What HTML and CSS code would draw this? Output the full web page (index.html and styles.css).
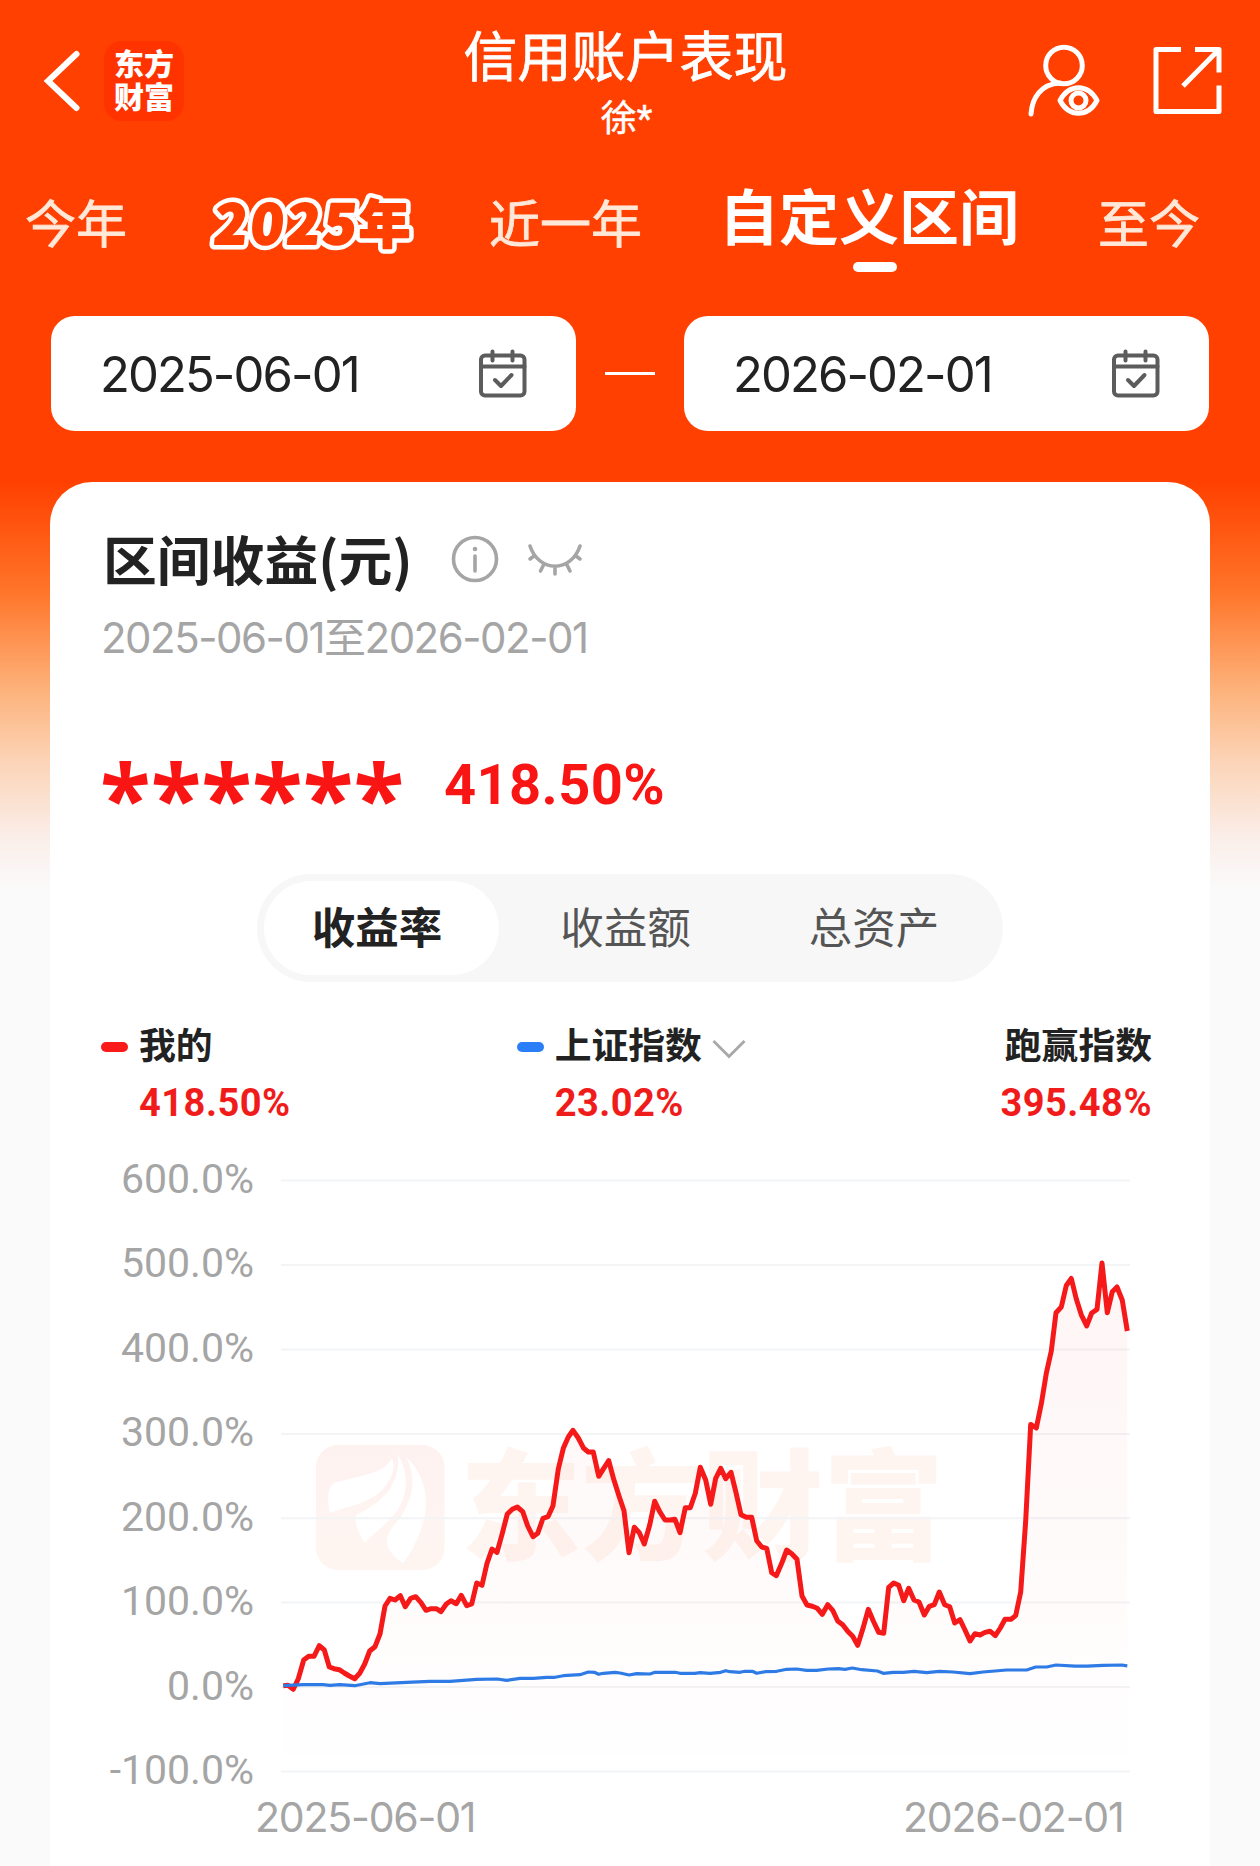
FILE: index.html
```html
<!DOCTYPE html>
<html lang="zh-CN">
<head>
    <meta charset="UTF-8">
    <meta name="viewport" content="width=device-width, initial-scale=1.0">
    <title>信用账户表现</title>
    <link rel="stylesheet" href="styles.css">
</head>
<body>
    <div class="page">
        <header class="header">
            <div class="header-left">
                <svg class="back" width="40" height="64" viewBox="0 0 40 64">
                    <path d="M34.500 5L6 32L34.500 59" fill="none" stroke="#fff" stroke-width="6" stroke-linecap="round"/>
                </svg>
                <div class="logo">东方<br>财富</div>
            </div>
            <div class="header-title">
                <h1>信用账户表现</h1>
                <p>徐*</p>
            </div>
            <div class="header-right">
                <svg width="76" height="76" viewBox="0 0 76 76" fill="none" stroke="#fff" stroke-width="5">
                    <circle cx="39" cy="24.500" r="18.3"/>
                    <path d="M6 73C7 57 16 43 35 42" stroke-linecap="round"/>
                    <path d="M35 59.500C44 42.500 63 42.500 72 59.500C63 76.500 44 76.500 35 59.500Z" stroke-linejoin="round"/>
                    <circle cx="53.500" cy="59.500" r="7.500"/>
                </svg>
                <svg width="70" height="70" viewBox="0 0 70 70" fill="none" stroke="#fff" stroke-width="5">
                    <path d="M28 3.500H3V65.500H66V39.500M42 3.500H66V26.500M65 4.500L30 40" stroke-linejoin="round"/>
                </svg>
            </div>
        </header>

        <nav class="tabs">
            <span class="tab">今年</span>
            <svg class="tab-year" width="206" height="64" viewBox="0 0 206 64">
                <defs>
                    <g id="year">
                        <text class="year-text" transform="skewX(-6)" x="13" y="50" textLength="142" lengthAdjust="spacing">2025</text>
                        <text class="year-text year-char" x="154" y="49">年</text>
                    </g>
                </defs>
                <use href="#year" class="year-outline"/>
                <use href="#year" class="year-fill"/>
            </svg>
            <span class="tab">近一年</span>
            <span class="tab active">自定义区间</span>
            <span class="tab">至今</span>
        </nav>

        <div class="dates">
            <div class="date-box">
                <span>2025-06-01</span>
                <svg class="calendar" width="50" height="50" viewBox="0 0 50 50">
                    <rect x="3" y="6.500" width="43.500" height="40" rx="4"/>
                    <path d="M3 17.500H46.500M14.500 2.500V11.500M34.500 2.500V11.500M17 31L23 37L33.500 26"/>
                </svg>
            </div>
            <i class="dates-line"></i>
            <div class="date-box">
                <span>2026-02-01</span>
                <svg class="calendar" width="50" height="50" viewBox="0 0 50 50">
                    <rect x="3" y="6.500" width="43.500" height="40" rx="4"/>
                    <path d="M3 17.500H46.500M14.500 2.500V11.500M34.500 2.500V11.500M17 31L23 37L33.500 26"/>
                </svg>
            </div>
        </div>

        <main class="card">
            <div class="card-title">
                <h2>区间收益(元)</h2>
                <svg width="50" height="50" viewBox="0 0 50 50" fill="none" stroke="#a5a5a5" stroke-width="3.600">
                    <circle cx="25" cy="25" r="21.500"/>
                    <path d="M25 22V37" stroke-linecap="round"/>
                    <circle cx="25" cy="15" r="2.300" fill="#a5a5a5" stroke="none"/>
                </svg>
                <svg class="eye" width="56" height="34" viewBox="0 0 56 34" fill="none" stroke="#a5a5a5" stroke-width="3.600" stroke-linecap="round">
                    <path d="M3 4C12 31 44 31 53 4M7 14L3 17M17 22L13.500 29M28 24V32M39.500 22L43 29M49 14L53 17"/>
                </svg>
            </div>
            <p class="period">2025-06-01至2026-02-01</p>

            <div class="profit">
                <span class="hidden-amount">******</span>
                <span class="profit-rate">418.50%</span>
            </div>

            <div class="segment">
                <span class="on">收益率</span>
                <span>收益额</span>
                <span>总资产</span>
            </div>

            <div class="legend">
                <div class="legend-item mine">
                    <p><i class="mark red"></i>我的</p>
                    <b>418.50%</b>
                </div>
                <div class="legend-item index">
                    <p><i class="mark blue"></i>上证指数
                        <svg width="36" height="22" viewBox="0 0 36 22">
                            <path d="M2.500 3L18 18.500L33.500 3" fill="none" stroke="#a8a8a8" stroke-width="2.800"/>
                        </svg>
                    </p>
                    <b>23.02%</b>
                </div>
                <div class="legend-item beat">
                    <p>跑赢指数</p>
                    <b>395.48%</b>
                </div>
            </div>

            <svg class="chart" width="1160" height="726" viewBox="50 1140 1160 726">
                <defs>
                    <linearGradient id="area" gradientUnits="userSpaceOnUse" x1="0" y1="1262" x2="0" y2="1756">
                        <stop offset="0" stop-color="#f51a1a" stop-opacity="0.045"/>
                        <stop offset="1" stop-color="#f51a1a" stop-opacity="0.003"/>
                    </linearGradient>
                    <linearGradient id="brand" x1="0" y1="0" x2="0" y2="1">
                        <stop offset="0" stop-color="#fef2f0"/>
                        <stop offset="1" stop-color="#fef5f1"/>
                    </linearGradient>
                </defs>

                <!-- watermark -->
                <rect x="316" y="1445" width="128.500" height="125" rx="22" fill="url(#brand)"/>
                <g fill="#fff">
                    <path d="M392 1458C384 1474 362 1475 334 1483C327 1488 327 1500 330 1513C350 1506 372 1502 384 1488C392 1478 396 1468 392 1458Z"/>
                    <path d="M398 1455C400 1480 388 1500 356 1515C354 1525 360 1536 365 1543C372 1534 386 1526 397 1511C409 1494 408 1470 398 1455Z"/>
                    <path d="M406 1457C418 1478 412 1500 400 1518C389 1530 383 1540 390 1551C394 1557 399 1561 403 1563C414 1550 427 1522 426 1500C425 1480 416 1466 406 1457Z"/>
                </g>
                <text class="watermark" x="460" y="1551" textLength="484" lengthAdjust="spacingAndGlyphs">东方财富</text>

                <path class="grid" d="M281 1180.500H1130M281 1265H1130M281 1349.500H1130M281 1434H1130M281 1518.300H1130M281 1602.500H1130M281 1687H1130M281 1771.500H1130"/>

                <g class="axis axis-y">
                    <text x="254" y="1192.5">600.0%</text>
                    <text x="254" y="1276.5">500.0%</text>
                    <text x="254" y="1361.5">400.0%</text>
                    <text x="254" y="1445.5">300.0%</text>
                    <text x="254" y="1530.5">200.0%</text>
                    <text x="254" y="1614.5">100.0%</text>
                    <text x="254" y="1699.5">0.0%</text>
                    <text x="254" y="1783.5">-100.0%</text>
                </g>
                <g class="axis axis-x">
                    <text x="255" y="1832">2025-06-01</text>
                    <text x="903" y="1832">2026-02-01</text>
                </g>

                <polygon id="mineArea" fill="url(#area)"/>
                <polyline id="mineLine" class="line-mine"/>
                <polyline id="indexLine" class="line-index"/>
            </svg>
        </main>
    </div>

    <script src="chart.js"></script>
</body>
</html>
```
FILE: styles.css
```css
* {
    box-sizing: border-box;
    margin: 0;
    padding: 0;
}
body {
    font-family: Roboto, "Noto Sans CJK SC", sans-serif;
    background-color: #fafafa;
    color: #222;
}
.page {
    width: 1260px;
    height: 1866px;
    overflow: hidden;
    background: linear-gradient(#ff4000 0, #ff4000 482px, #ff7428 590px, #fdb27b 690px, #fcd3b6 760px, #faeee9 838px, #fafafa 888px);
}
svg {
    display: block;
    flex: none;
}

/* header */
.header {
    display: grid;
    grid-template-columns: 300px 1fr 300px;
    height: 160px;
    color: #fff;
}
.header-left {
    display: flex;
    align-items: center;
    gap: 22px;
    height: 162px;
    padding-left: 42px;
}
.logo {
    width: 80px;
    height: 80px;
    padding-top: 7px;
    border-radius: 18px;
    background-color: #ff3300;
    font-size: 30px;
    font-weight: 900;
    line-height: 33px;
    text-align: center;
}
.header-title {
    padding-top: 24px;
    padding-right: 9px;
    text-align: center;
}
.header-title h1 {
    font-size: 54px;
    font-weight: 400;
    line-height: 70px;
    -webkit-text-stroke: 0.8px #fff;
}
.header-title p {
    padding-left: 2px;
    font-size: 36px;
    line-height: 50px;
    -webkit-text-stroke: 0.5px #fff;
}
.header-right {
    display: flex;
    align-items: flex-start;
    gap: 52px;
    padding: 41px 0 0 65px;
}
.header-right svg + svg {
    margin-top: 5px;
}

/* period tabs */
.tabs {
    display: flex;
    align-items: flex-start;
    gap: 78px;
    height: 156px;
    padding: 34px 0 0 25px;
    color: #ffe8d8;
}
.tab {
    flex: none;
    font-size: 51px;
    line-height: 64px;
    -webkit-text-stroke: 0.8px;
}
.tab.active {
    display: flex;
    flex-direction: column;
    align-items: center;
    color: #fff;
    font-size: 60px;
    font-weight: 700;
    line-height: 72px;
    margin: -10px 1px 0 -1px;
    -webkit-text-stroke: 0;
}
.tab.active::after {
    content: "";
    width: 44px;
    height: 10px;
    margin: 6px 0 0 12px;
    border-radius: 5px;
    background-color: #fff;
}
.tab-year {
    overflow: visible;
}
.year-text {
    font-family: "Noto Sans CJK SC", sans-serif;
    font-size: 54px;
    font-weight: 900;
    stroke-linejoin: round;
}
.year-char {
    font-size: 51px;
}
.year-outline {
    fill: #fff;
    stroke: #fff;
    stroke-width: 11px;
}
.year-fill {
    fill: #ff4000;
    stroke: #ff4000;
    stroke-width: 2px;
}

/* date range */
.dates {
    display: flex;
    align-items: center;
    justify-content: space-between;
    height: 115px;
    padding: 0 51px;
}
.date-box {
    display: flex;
    align-items: center;
    justify-content: space-between;
    width: 525px;
    height: 115px;
    padding: 0 48px 0 49px;
    border-radius: 24px;
    background-color: #fff;
    font-family: Inter, sans-serif;
    font-size: 49px;
    letter-spacing: -1.9px;
}
.date-box span {
    padding-top: 2px;
}
.dates-line {
    width: 50px;
    height: 3px;
    background-color: #fff;
}
.calendar {
    fill: none;
    stroke: #5c5c5c;
    stroke-width: 4;
    stroke-linecap: round;
    stroke-linejoin: round;
}

/* card */
.card {
    width: 1160px;
    height: 1384px;
    margin: 51px 50px 0;
    padding-top: 42px;
    border-radius: 42px 42px 0 0;
    background-color: #fff;
}
.card-title {
    display: flex;
    align-items: center;
    height: 70px;
    padding-left: 53px;
}
.card-title h2 {
    width: 347px;
    font-family: "Noto Sans CJK SC", sans-serif;
    font-size: 53.8px;
    font-weight: 700;
    line-height: 66px;
    padding-bottom: 3px;
    white-space: nowrap;
}
.card-title .eye {
    margin-left: 27px;
}
.period {
    padding-left: 51px;
    margin-top: 16px;
    color: #a5a5a5;
    font-family: Inter, "Noto Sans CJK SC", sans-serif;
    font-size: 42px;
    line-height: 56px;
    letter-spacing: -1.5px;
}
.profit {
    display: flex;
    height: 110px;
    margin-top: 73px;
    padding-left: 50px;
    color: #fa1515;
}
.hidden-amount {
    width: 344px;
    font-family: "Open Sans", sans-serif;
    font-size: 93px;
    font-weight: 700;
    line-height: 114px;
}
.profit-rate {
    font-size: 56px;
    font-weight: 700;
    line-height: 92px;
    letter-spacing: 0.4px;
}
.segment {
    display: flex;
    width: 746px;
    height: 108px;
    margin: 25px 0 0 207px;
    padding: 7px;
    border-radius: 54px;
    background-color: #f7f7f7;
    color: #555;
    font-size: 43.5px;
}
.segment span {
    width: 235px;
    margin-right: 13.5px;
    padding: 3px 9px 0 0;
    border-radius: 47px;
    line-height: 91px;
    text-align: center;
    flex: none;
}
.segment .on {
    background-color: #fff;
    color: #222;
    font-weight: 700;
}

/* legend */
.legend {
    display: flex;
    height: 158px;
    padding: 36px 58px 0 51px;
}
.legend-item p {
    display: flex;
    align-items: center;
    font-size: 36.8px;
    font-weight: 700;
    line-height: 57px;
}
.legend-item b {
    display: block;
    padding-left: 38px;
    color: #f01c1c;
    font-size: 38px;
    line-height: 56px;
    letter-spacing: 0.5px;
}
.legend-item svg {
    margin: 5px 0 0 9px;
}
.index {
    margin-left: 226px;
}
.beat {
    margin-left: auto;
}
.beat p {
    justify-content: flex-end;
}
.beat b {
    padding-left: 0;
}
.mark {
    width: 27px;
    height: 10px;
    margin-right: 11px;
    border-radius: 5px;
}
.mark.red {
    background-color: #fa1a1a;
}
.mark.blue {
    background-color: #2a7ff8;
}

/* chart */
.grid {
    fill: none;
    stroke: #f2f4f5;
    stroke-width: 2;
}
.axis text {
    fill: #a5a5a5;
    font-size: 41px;
}
.axis-y text {
    text-anchor: end;
}
.axis-x text {
    font-family: Inter, sans-serif;
    letter-spacing: -1.2px;
}
.watermark {
    font-family: "Noto Sans CJK SC", sans-serif;
    font-size: 120px;
    font-weight: 900;
    fill: #fef5f0;
}
.line-mine,
.line-index {
    fill: none;
    stroke: #f51919;
    stroke-width: 5;
    stroke-linejoin: round;
}
.line-index {
    stroke: #2f7be5;
    stroke-width: 3.2;
}
```
FILE: chart.js
```js
// points of both curves, in chart coordinates
var mine = '283.3,1685.7 288,1685.3 293.3,1689.3 298.3,1678.7 303.7,1660 308.7,1656.3 314,1656.3 319.3,1645.7 324.3,1650 329.3,1667 334,1668.7 339.3,1669.7 344.3,1673 349.3,1676 354.7,1678.7 359.7,1673.3 364.7,1664 369.7,1651 375,1646.7 380,1634 385,1606 390,1598.3 395,1600 400.3,1595.7 405.3,1606.7 410.7,1598.3 415.7,1596.7 421,1602.7 426,1610.3 431,1608.7 436.3,1608.7 441,1611.7 446.3,1604 451,1600.7 456.3,1603.7 461.3,1595.3 466.7,1605.7 471.7,1604 476.7,1583 482,1585.3 487,1563.3 492,1549 497,1552.3 502.3,1533.3 507.3,1514 512.3,1509.3 517.3,1507 522.7,1511.7 527.7,1526 533,1536.7 537.7,1533.3 543,1518.3 548,1516.7 553,1505.7 558.3,1469 563.3,1448.3 568.3,1437 573,1430.3 578.3,1438 583.7,1448.3 588.3,1452 593.3,1452 598.7,1476.3 603.7,1468.3 608.7,1460.7 613.7,1479.3 ' +
    '619,1496 624,1510.7 629,1552.7 634.3,1527.3 639.3,1532.7 644.3,1544 649.7,1525 654.7,1501.3 659.7,1511.7 665,1520 670,1520 675,1519.3 680,1532.7 685.3,1507.7 690.3,1507.7 695.3,1493.3 700.3,1467.3 705.7,1480 710.7,1504.3 715.7,1478.3 720.7,1468.3 725.7,1478.7 731,1472.3 736,1492.7 741,1514.7 746.3,1517.3 751.7,1517.3 756.7,1540.7 761.7,1547 766.7,1548.3 771.7,1572.7 776.3,1575.7 781.7,1563.3 786.7,1550 792,1554 797,1559.3 802,1596 807,1605 812.3,1606.3 817.3,1608.3 822.3,1614.3 827.7,1604.7 832.7,1610.3 837.7,1621 842.7,1624.7 847.7,1631.3 852.7,1636.3 857.7,1645.3 863,1628.3 868.3,1609.3 873.3,1621 878.7,1632.3 883.7,1633.3 888.7,1587.3 893.7,1583 898.7,1585.3 903.7,1600.7 908.7,1588.3 914,1600 919,1602 924.3,1615 929.3,1606.3 934.3,1604.7 939.3,1592 944.7,1604.7 949.7,1606.7 954.7,1623 960,1619.7 ' +
    '965,1630 970,1641 975,1633.7 980,1635 985,1632.4 990,1631.2 995.3,1635.7 1000.3,1628 1005,1619.3 1011,1619.3 1015.7,1615.6 1020.7,1592 1025.7,1520.8 1030.7,1424.4 1036.3,1428 1041.3,1403.8 1046.3,1373.3 1051.3,1351 1056,1312.7 1061.3,1307 1066.3,1285.5 1071.3,1278.5 1076.3,1299 1081.3,1314.8 1086.7,1325.9 1091.7,1313 1097,1309.4 1102,1262.9 1107.3,1312.7 1112.3,1291.7 1117,1287 1122.3,1300.3 1127.3,1331';

var index = '283.3,1685.7 303,1684.7 323,1684.7 330,1685.3 340,1684.7 354.7,1685.7 370,1682.7 380,1683.7 406.7,1682.3 430,1681.3 450,1681.3 476.7,1679.3 497.3,1679 506.7,1680.3 520,1678.3 533.3,1678.3 546.7,1677.3 555,1677.3 563.3,1675.7 580,1674.7 588.3,1672 594.3,1672.3 598.7,1674.3 603.3,1673.3 615,1672.3 620,1673 629,1675 636.7,1673.7 650,1674 655,1672.3 675,1672.3 680,1673.3 695,1673.3 700,1672.7 710,1673.3 720.7,1672.3 725.7,1670.7 730,1671.7 740,1672.3 745,1671.3 752.3,1671.3 756.7,1673.3 765,1671.7 776.7,1671.3 786.7,1669.3 796.7,1669 806.7,1670.3 816.7,1670.3 828.3,1669 838.3,1668.7 845,1669.3 852.3,1668 861.7,1669.7 877.3,1671 883.3,1673.3 893.3,1672.3 903.3,1672.3 914,1671.3 926.7,1672.7 939.3,1671.3 953,1672 970,1673.6 983,1672 1006.7,1670 1026.7,1670 1035.7,1667 1046.7,1667 1056,1665 1075,1666.2 1087,1666.2 1103.3,1665.4 1121.7,1665 1127.3,1665.8';

document.getElementById('mineLine').setAttribute('points', mine);
document.getElementById('indexLine').setAttribute('points', index);
document.getElementById('mineArea').setAttribute('points', mine + ' 1127.3,1756 283.3,1756');
```
